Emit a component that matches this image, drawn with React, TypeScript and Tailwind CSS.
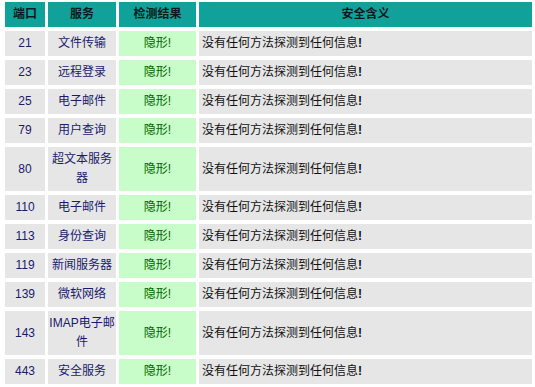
import React from "react";

const rows: { port: string; svc: string; tall?: boolean }[] = [
  { port: "21", svc: "文件传输" },
  { port: "23", svc: "远程登录" },
  { port: "25", svc: "电子邮件" },
  { port: "79", svc: "用户查询" },
  { port: "80", svc: "超文本服务器", tall: true },
  { port: "110", svc: "电子邮件" },
  { port: "113", svc: "身份查询" },
  { port: "119", svc: "新闻服务器" },
  { port: "139", svc: "微软网络" },
  { port: "143", svc: "IMAP电子邮件", tall: true },
  { port: "443", svc: "安全服务" },
];

const font = { fontFamily: '"Liberation Sans", "Noto Sans CJK SC", sans-serif' };

export default function App() {
  return (
    <div className="w-[535px] h-[387px] bg-white overflow-hidden pt-[2px] pl-[5px]" style={font}>
      <div className="grid grid-cols-[40px_68px_77px_333px] gap-x-[3px] gap-y-[4px] text-[12px] leading-[19px]">
        <div className="h-[25px] bg-[#10a29a] flex items-center justify-center font-bold text-[#0a1a1a]">端口</div>
        <div className="h-[25px] bg-[#10a29a] flex items-center justify-center font-bold text-[#0a1a1a]">服务</div>
        <div className="h-[25px] bg-[#10a29a] flex items-center justify-center font-bold text-[#0a1a1a]">检测结果</div>
        <div className="h-[25px] bg-[#10a29a] flex items-center justify-center font-bold text-[#0a1a1a]">安全含义</div>
        {rows.map((r) => (
          <React.Fragment key={r.port}>
            <div className={`${r.tall ? "h-[44px]" : "h-[25px]"} bg-[#e6e6e6] flex items-center justify-center text-[#1a1a6e]`}>{r.port}</div>
            <div className={`${r.tall ? "h-[44px]" : "h-[25px]"} bg-[#e6e6e6] flex items-center justify-center text-center text-[#1a1a6e]`}>{r.svc}</div>
            <div className={`${r.tall ? "h-[44px]" : "h-[25px]"} bg-[#c8fcc8] flex items-center justify-center text-[#006600]`}>隐形!</div>
            <div className={`${r.tall ? "h-[44px]" : "h-[25px]"} bg-[#e6e6e6] flex items-center pl-[3px] text-[#111]`}>
              没有任何方法探测到任何信息<span className="font-bold">!</span>
            </div>
          </React.Fragment>
        ))}
      </div>
    </div>
  );
}
